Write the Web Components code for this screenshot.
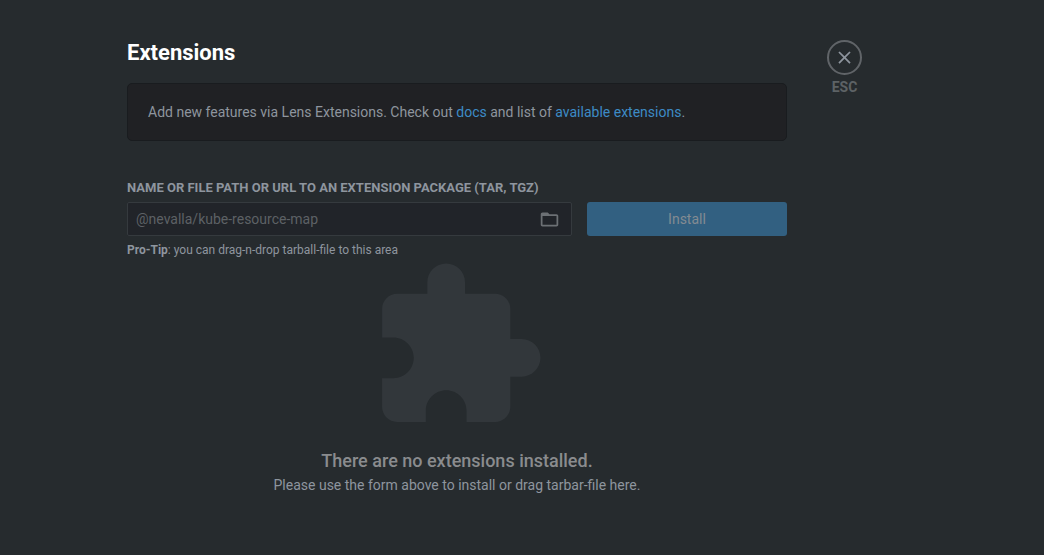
<!DOCTYPE html>
<html lang="en">
<head>
<meta charset="utf-8">
<meta name="viewport" content="width=device-width, initial-scale=1">
<title>Extensions</title>
<style>
  html { background: #262b2e; }
  body {
    margin: 0;
    font: 14px/20px Roboto, "Liberation Sans", sans-serif;
    color: #8e959e;
    --accent: #3d8bc6;
    --field: #212429;
    --line: #353a3e;
  }
</style>
</head>
<body>
<extensions-page></extensions-page>

<script>
class BaseElement extends HTMLElement {
  constructor() {
    super();
    this.attachShadow({ mode: "open" }).innerHTML =
      "<style>*{box-sizing:border-box}</style>" + this.constructor.markup;
  }
}

class SettingLayout extends BaseElement {
  static markup = `
    <style>
      :host { display: grid; grid-template-columns: 1fr minmax(0, 660px) 1fr; padding: 40px 130px 40px 0; }
      main { grid-column: 2; }
      aside { padding-left: 40px; }
    </style>
    <main><slot></slot></main>
    <aside><slot name="tools"></slot></aside>`;
}

class CloseButton extends BaseElement {
  static markup = `
    <style>
      :host { display: inline-block; }
      button {
        display: flex; flex-direction: column; align-items: center; gap: 2px;
        padding: 0; border: 0; background: none; cursor: pointer;
        font: 700 14px/20px Roboto, sans-serif; color: #5d6265;
      }
      .ring { display: grid; place-items: center; width: 35px; height: 35px; border: 2px solid #606468; border-radius: 50%; }
      svg { display: block; width: 21px; height: 21px; fill: #8e959e; }
    </style>
    <button type="button">
      <span class="ring">
        <svg viewBox="0 0 24 24" aria-hidden="true"><path d="M19 6.41L17.59 5 12 10.59 6.41 5 5 6.41 10.59 12 5 17.59 6.41 19 12 13.41 17.59 19 19 17.59 13.41 12z"/></svg>
      </span>
      <span>ESC</span>
    </button>`;
}

class InfoPanel extends BaseElement {
  static markup = `
    <style>
      :host { display: block; padding: 18px 20px; background: #202124; border: 1px solid #191c1f; border-radius: 5px; }
      p { margin: 0; }
      ::slotted(a) { color: var(--accent); text-decoration: none; }
    </style>
    <p><slot></slot></p>`;
}

class InstallForm extends BaseElement {
  static markup = `
    <style>
      :host { display: block; }
      form { margin: 0; }
      label { display: block; font-size: 13px; line-height: 20px; font-weight: 700; text-transform: uppercase; }
      .row { display: flex; gap: 15px; margin: 4px 0; }
      .field {
        flex: 1; min-width: 0; display: flex; align-items: center; height: 34px; padding: 0 11px 0 8px;
        background: var(--field); border: 1px solid var(--line); border-radius: 2px;
      }
      input {
        flex: 1; min-width: 0; padding: 0; border: 0; outline: 0; background: none;
        font: 14px/20px Roboto, sans-serif; color: #8e959e;
      }
      input::placeholder { color: #5d6165; opacity: 1; }
      .browse { padding: 0; border: 0; background: none; cursor: pointer; }
      svg { display: block; width: 21px; height: 21px; fill: #6c7074; }
      .install {
        width: 200px; height: 34px; padding: 0; border: 0; border-radius: 3px; cursor: pointer;
        background: #326081; color: #838b92; font: 14px/20px Roboto, sans-serif;
      }
      small { display: block; font-size: 12px; line-height: 20px; }
      b { font-weight: 700; }
    </style>
    <form>
      <label for="package">Name or file path or URL to an extension package (tar, tgz)</label>
      <div class="row">
        <div class="field">
          <input id="package" type="text" placeholder="@nevalla/kube-resource-map">
          <button class="browse" type="button" aria-label="Browse">
            <svg viewBox="0 0 24 24" aria-hidden="true"><path d="M20 6h-8l-2-2H4c-1.1 0-1.99.9-1.99 2L2 18c0 1.1.9 2 2 2h16c1.1 0 2-.9 2-2V8c0-1.1-.9-2-2-2zm0 12H4V8h16v10z"/></svg>
          </button>
        </div>
        <button class="install" type="button">Install</button>
      </div>
      <small><b>Pro-Tip</b>: you can drag-n-drop tarball-file to this area</small>
    </form>`;
}

class EmptyState extends BaseElement {
  static markup = `
    <style>
      :host { display: flex; flex-direction: column; align-items: center; text-align: center; }
      svg { display: block; width: 181px; height: 181px; fill: #32373b; }
      h2 { margin: 12px 0 2px; font-size: 18px; line-height: 24px; font-weight: 500; color: #8a8c8e; }
      p { margin: 0; }
    </style>
    <svg viewBox="0 0 24 24" aria-hidden="true"><path d="M20.5 11H19V7c0-1.1-.9-2-2-2h-4V3.5C13 2.12 11.88 1 10.5 1S8 2.12 8 3.5V5H4c-1.1 0-1.99.9-1.99 2v3.8H3.5c1.49 0 2.7 1.21 2.7 2.7s-1.21 2.7-2.7 2.7H2V20c0 1.1.9 2 2 2h3.8v-1.5c0-1.49 1.21-2.7 2.7-2.7 1.49 0 2.7 1.21 2.7 2.7V22H17c1.1 0 2-.9 2-2v-4h1.5c1.38 0 2.5-1.12 2.5-2.5S21.88 11 20.5 11z"/></svg>
    <h2><slot name="title"></slot></h2>
    <p><slot></slot></p>`;
}

class ExtensionsPage extends BaseElement {
  static markup = `
    <style>
      :host { display: block; }
      h1 { margin: 0 0 17px; font-size: 22px; line-height: 26px; font-weight: 700; color: #fff; }
      install-form { margin-top: 37px; }
      empty-state { margin-top: -4px; }
    </style>
    <setting-layout>
      <h1>Extensions</h1>
      <info-panel>Add new features via Lens Extensions. Check out <a href="#docs">docs</a> and list of <a href="#extensions">available extensions</a>.</info-panel>
      <install-form></install-form>
      <empty-state>
        <span slot="title">There are no extensions installed.</span>
        Please use the form above to install or drag tarbar-file here.
      </empty-state>
      <close-button slot="tools"></close-button>
    </setting-layout>`;
}

customElements.define("setting-layout", SettingLayout);
customElements.define("close-button", CloseButton);
customElements.define("info-panel", InfoPanel);
customElements.define("install-form", InstallForm);
customElements.define("empty-state", EmptyState);
customElements.define("extensions-page", ExtensionsPage);
</script>
</body>
</html>
